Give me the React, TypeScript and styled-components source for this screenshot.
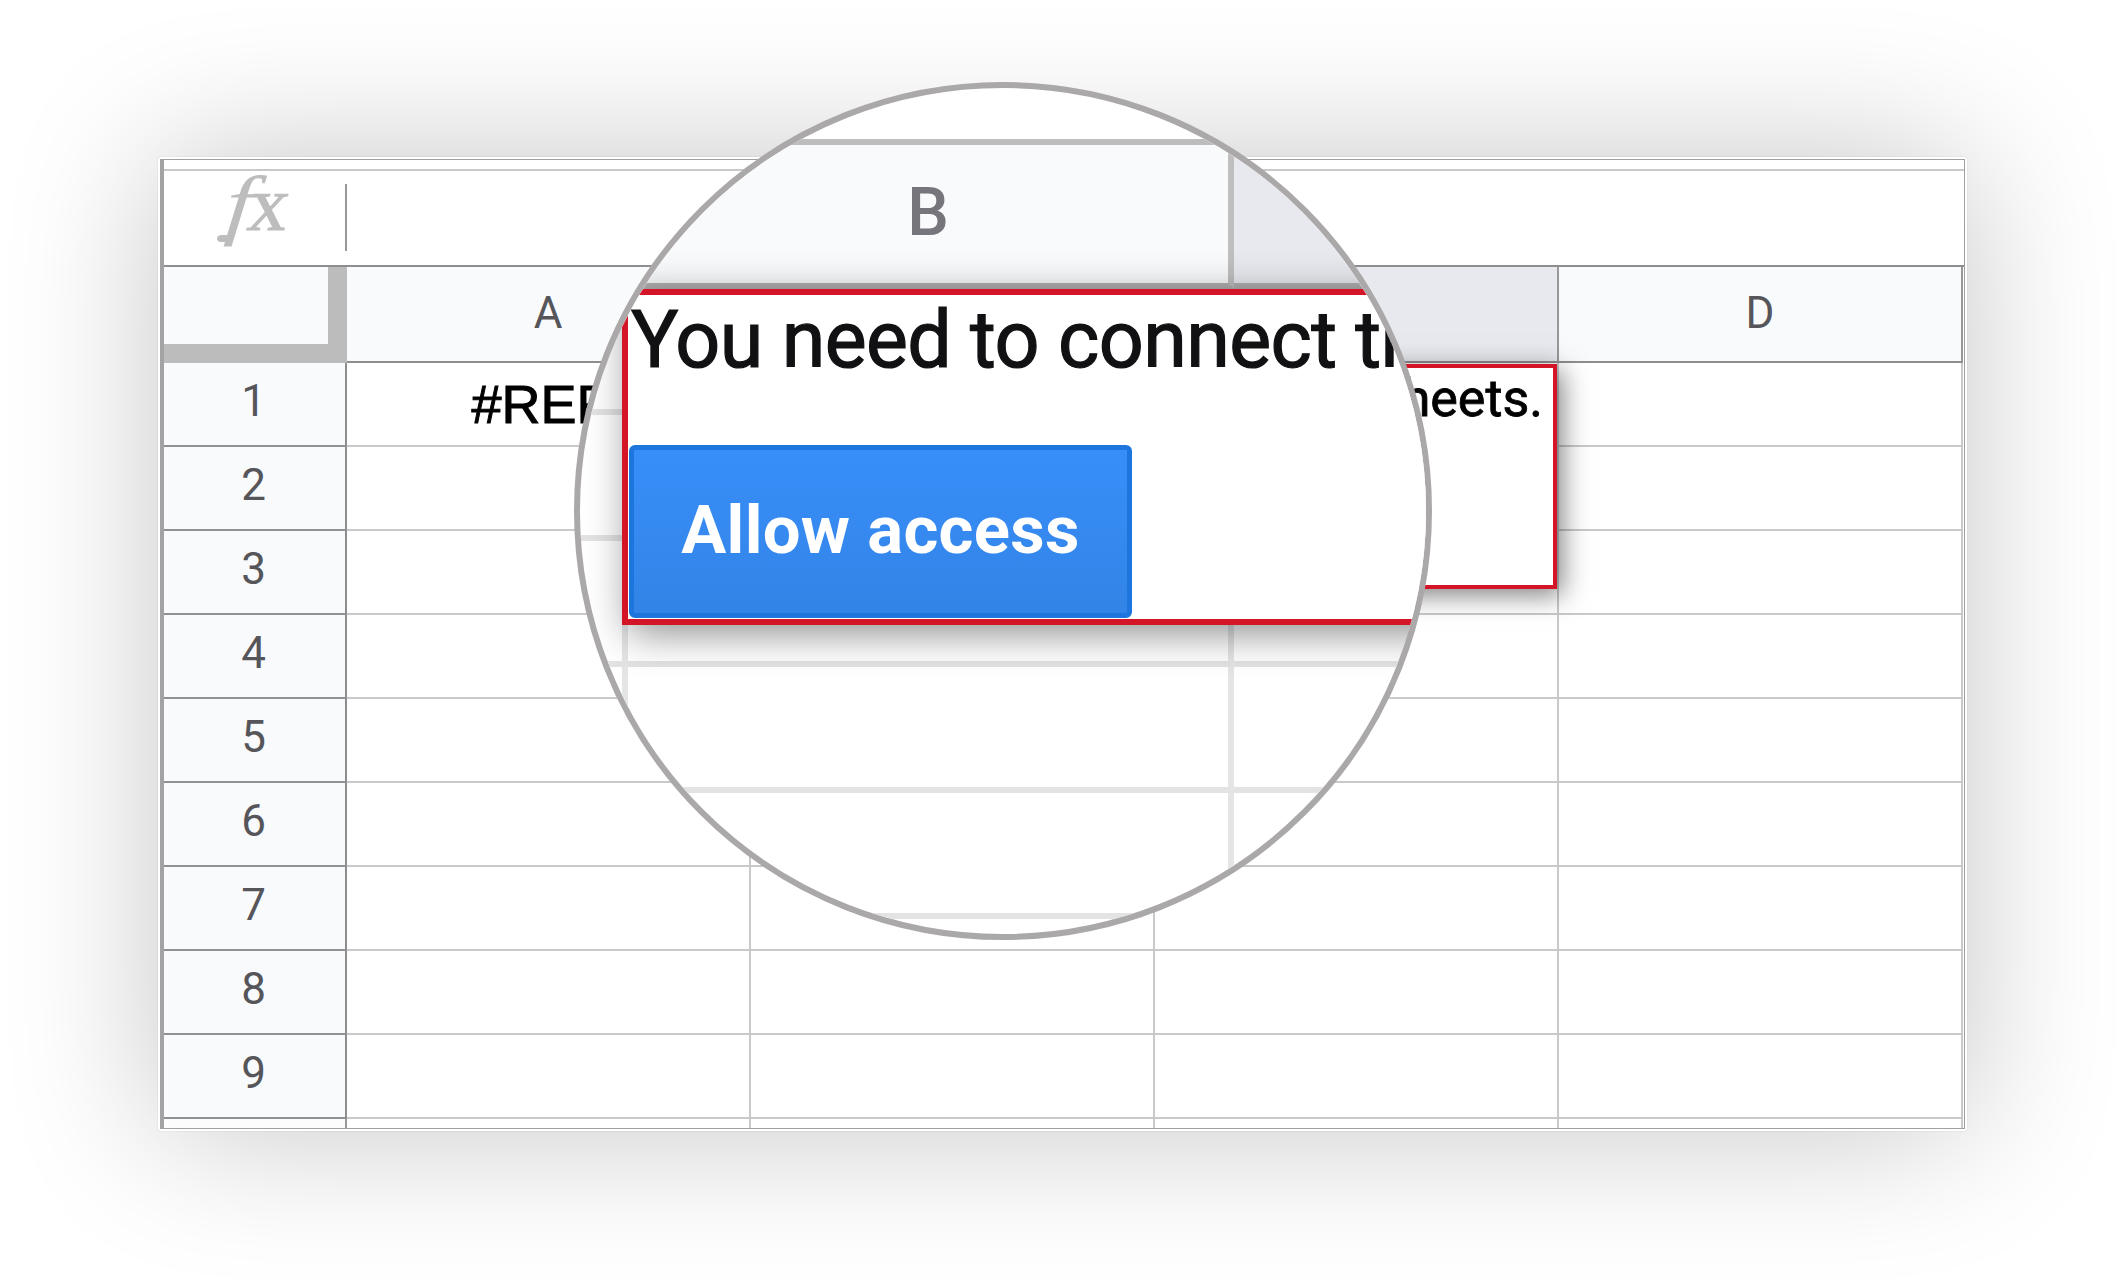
import styled, { createGlobalStyle } from 'styled-components';

const COLUMNS = ['A', 'B', 'C', 'D'];
const ROWS = [1, 2, 3, 4, 5, 6, 7, 8, 9];
const LENS_ROWS = [1, 2, 3, 4, 5, 6];
const ACTIVE_COLUMN = 'C';
// headers that lie under the magnifier have no label
const COVERED_COLUMNS = ['B', 'C'];

const App: React.FC = () => {
  return (
    <Page>
      <GlobalStyle />
      <Window>
        <Sheet>
          <TopStrip />
          <FormulaBar>
            <FxLabel>
              <FxF>f</FxF>
              <FxX>x</FxX>
            </FxLabel>
            <Divider />
          </FormulaBar>
          <Row>
            <Corner />
            {COLUMNS.map((name) => (
              <ColumnHeader key={name} $active={name === ACTIVE_COLUMN}>
                {COVERED_COLUMNS.includes(name) ? '' : name}
              </ColumnHeader>
            ))}
          </Row>
          {ROWS.map((row) => (
            <Row key={row}>
              <RowHeader>{row}</RowHeader>
              {COLUMNS.map((name) => (
                <Cell key={name}>{row === 1 && name === 'A' ? '#REF!' : ''}</Cell>
              ))}
            </Row>
          ))}
          <LastRow>
            <StubHeader />
            {COLUMNS.map((name) => (
              <StubCell key={name} />
            ))}
          </LastRow>
          <Popup>
            <PopupText>sheets.</PopupText>
          </Popup>
        </Sheet>
      </Window>
      <Lens>
        <LensBar />
        <LensHeaderRow>
          <LensHeader />
          <LensHeader>B</LensHeader>
          <LensHeader $active />
        </LensHeaderRow>
        {LENS_ROWS.map((row) => (
          <LensRow key={row}>
            <LensCell />
            <LensCell />
            <LensCell />
          </LensRow>
        ))}
        <LensPopup>
          <LensText>You need to connect th</LensText>
          <AllowButton type="button">Allow access</AllowButton>
        </LensPopup>
      </Lens>
    </Page>
  );
};

const GlobalStyle = createGlobalStyle`
  * {
    box-sizing: border-box;
  }
  body {
    margin: 0;
    background: #fff;
    font-family: Roboto, 'Liberation Sans', sans-serif;
  }
`;

const Page = styled.div`
  position: relative;
  width: 2124px;
  height: 1288px;
  padding: 157px 156px 157px 158px;
  overflow: hidden;
  background: #fff;
`;
const Window = styled.div`
  width: 1809px;
  height: 974px;
  padding: 2px;
  border-radius: 3px;
  background: #fff;
  box-shadow:
    0 0 2px rgba(0, 0, 0, 0.12),
    0 0 150px rgba(0, 0, 0, 0.23);
`;
const Sheet = styled.div`
  position: relative;
  height: 970px;
  border: 1px solid #a0a0a0;
  border-left: 4px solid #a3a3a6;
  background: #fff;
`;
const TopStrip = styled.div`
  height: 11px;
  border-bottom: 2px solid #c9c9c9;
`;
const FormulaBar = styled.div`
  display: flex;
  height: 96px;
  border-bottom: 2px solid #8e8e91;
`;
const FxLabel = styled.div`
  display: flex;
  width: 181px;
  padding-left: 68px;
  line-height: 66px;
  color: #bdbdbd;
  font-family: 'Liberation Serif', serif;
  font-size: 78px;
`;
const FxF = styled.span`
  position: relative;
  width: 16px;
  font-style: italic;
  transform: translateX(-5px) scaleX(1.25) skewX(-4deg);

  /* hook at the end of the tail */
  &::after {
    content: '';
    position: absolute;
    left: -5px;
    top: 64px;
    width: 10px;
    height: 7px;
    border-radius: 4px;
    background: #bdbdbd;
  }
`;
const FxX = styled.span`
  transform: skewX(-9deg);
  -webkit-text-stroke: 1px #bdbdbd;
`;
const Divider = styled.div`
  width: 2px;
  height: 67px;
  margin-top: 13px;
  background: #98989a;
`;
const Row = styled.div`
  display: grid;
  grid-template-columns: 183px repeat(4, 404px);
`;
const LastRow = styled(Row)`
  height: 9px;
`;
const Corner = styled.div`
  height: 96px;
  border-right: 19px solid #bcbcbc;
  border-bottom: 19px solid #bcbcbc;
  background: #f9fafc;
`;
const ColumnHeader = styled.div<{ $active?: boolean }>`
  display: flex;
  align-items: center;
  justify-content: center;
  height: 96px;
  padding-bottom: 3px;
  border-right: 2px solid #98989a;
  border-bottom: 2px solid #8e8e91;
  color: #55555a;
  font-size: 44px;
  background: ${({ $active }) => ($active ? '#e8e9ee' : '#f9fafc')};
`;
const RowHeader = styled.div`
  display: flex;
  align-items: center;
  justify-content: center;
  height: 84px;
  padding: 0 2px 6px 0;
  border-right: 2px solid #8e8e91;
  border-bottom: 2px solid #919194;
  color: #55555a;
  font-size: 44px;
  background: #f9fafc;
`;
const Cell = styled.div`
  display: flex;
  align-items: center;
  justify-content: center;
  height: 84px;
  border-right: 2px solid #c9c9cb;
  border-bottom: 2px solid #c9c9cb;
  color: #000;
  font-family: 'Liberation Sans', sans-serif;
  font-size: 54px;
  -webkit-text-stroke: 1px #000;
`;
const StubHeader = styled.div`
  border-right: 2px solid #98989a;
  background: #fcfcfd;
`;
const StubCell = styled.div`
  border-right: 2px solid #c9c9cb;
`;
const Popup = styled.div`
  position: absolute;
  top: 204px;
  left: 586px;
  width: 807px;
  height: 225px;
  padding: 2px 10px 0 0;
  border: 4px solid #d41527;
  background: #fff;
  box-shadow: 5px 6px 25px rgba(0, 0, 0, 0.5);
`;
const PopupText = styled.div`
  line-height: 57px;
  color: #000;
  font-size: 52px;
  text-align: right;
  white-space: nowrap;
  -webkit-text-stroke: 0.8px #000;
`;

/* Magnifier over the sheet, everything in it is 1.5 times as large */
const Lens = styled.div`
  position: absolute;
  top: 82px;
  left: 574px;
  width: 858px;
  height: 858px;
  border: 6px solid #aaa8a9;
  border-radius: 50%;
  overflow: hidden;
  background: #fff;
`;
const LensBar = styled.div`
  height: 57px;
  border-bottom: 6px solid #bdbdbd;
`;
const LensRow = styled.div`
  display: grid;
  grid-template-columns: 48px 606px 1fr;
  height: 126px;
`;
const LensHeaderRow = styled(LensRow)`
  height: 144px;
`;
const LensHeader = styled.div<{ $active?: boolean }>`
  display: flex;
  align-items: center;
  justify-content: center;
  padding-bottom: 4px;
  border-right: 6px solid ${({ $active, children }) => ($active || children ? '#bfbfc0' : '#f9fafc')};
  border-bottom: 6px solid #b4b2b3;
  color: #77757c;
  font-size: 66px;
  font-weight: 500;
  background: ${({ $active }) => ($active ? '#e8e9ee' : '#f9fafc')};
`;
const LensCell = styled.div`
  border-right: 6px solid #e4e5e7;
  border-bottom: 6px solid #e3e3e3;
`;
const LensPopup = styled.div`
  position: absolute;
  top: 201px;
  left: 42px;
  width: 1212px;
  height: 336px;
  padding: 3px 0 0 1px;
  border: 6px solid #d41527;
  background: #fff;
  box-shadow: 7px 8px 38px rgba(0, 0, 0, 0.45);
`;
const LensText = styled.div`
  padding-left: 2px;
  line-height: 84px;
  color: #111114;
  font-size: 79px;
  letter-spacing: -0.62px;
  white-space: nowrap;
  -webkit-text-stroke: 1.2px #111114;
`;
const AllowButton = styled.button`
  display: block;
  width: 503px;
  height: 173px;
  margin-top: 63px;
  padding: 0 0 3px;
  border: 5px solid #1d75de;
  border-radius: 6px;
  color: #fff;
  font-family: inherit;
  font-size: 67px;
  font-weight: 700;
  letter-spacing: 0.3px;
  white-space: nowrap;
  background: linear-gradient(#388ef9, #3284e6);
`;

export default App;
